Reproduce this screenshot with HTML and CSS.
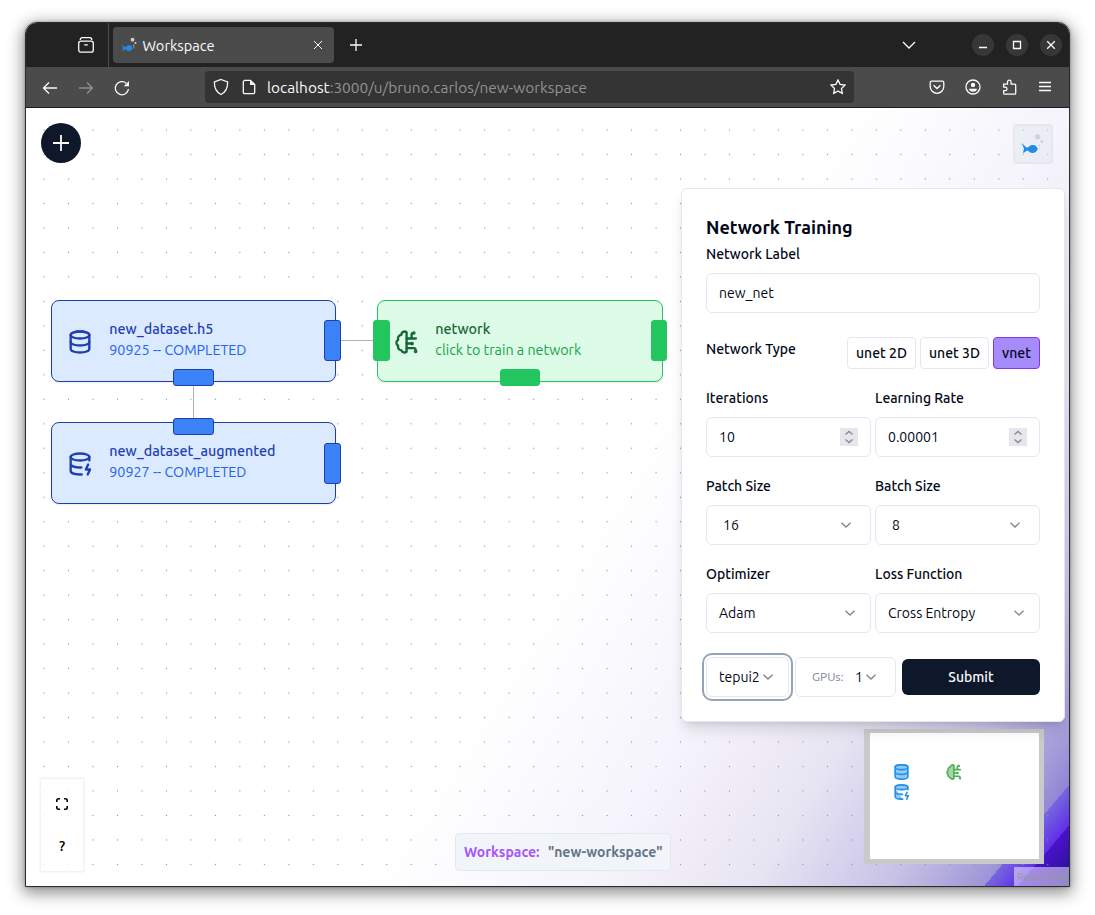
FILE: index.html
```html
<!DOCTYPE html>
<html lang="en">
<head>
<meta charset="utf-8">
<title>Workspace</title>
<link rel="stylesheet" href="styles.css">
</head>
<body>
<svg class="defs" aria-hidden="true">
  <symbol id="fish" viewBox="0 0 24 24">
    <path fill="#228be6" d="M.5 10.400 C2.800 12.200 4.600 14.600 6.600 15.400 C8.400 14.400 9.500 12.500 12 12.500 C15 12.300 17 14.700 17.600 16.700 C16.200 19.300 14.500 20.900 12 20.900 C9.800 20.800 8.400 19.400 6.800 18.200 C4.900 18.600 3.800 20 2.200 21.200 C2.200 19 3 17.600 3 16.400 C3 14.800 1.500 12.400 .5 10.400Z"/>
    <circle cx="17.300" cy="4" r="2.800" fill="#cfd4da"/><circle cx="21.700" cy="9" r="1.600" fill="#cfd4da"/><circle cx="19" cy="13" r="1" fill="#cfd4da"/><circle cx="19.600" cy="16.200" r=".8" fill="#cfd4da"/>
  </symbol>
  <symbol id="db" viewBox="0 0 24 24"><g stroke="currentColor" stroke-width="2" stroke-linejoin="round" stroke-linecap="round"><path d="M4 6v12c0 1.700 3.600 3 8 3s8-1.300 8-3V6c0-1.700-3.600-3-8-3S4 4.300 4 6z"/><ellipse cx="12" cy="6" rx="8" ry="3"/><path fill="none" d="M4 12c0 1.700 3.600 3 8 3s8-1.300 8-3"/></g></symbol>
  <symbol id="dbzap" viewBox="0 0 24 24"><g stroke="currentColor" stroke-width="2" stroke-linejoin="round" stroke-linecap="round"><ellipse cx="12" cy="6" rx="8" ry="3"/><path d="M4 6v12c0 1.500 2.900 2.900 7.500 3h2M20 6v3M4 12c0 1.600 3.200 2.800 7.200 3h2"/><path fill="none" d="M19 12.500l-2 4.200h3.600l-2 4.300"/></g></symbol>
  <symbol id="brain" viewBox="0 0 24 24"><g stroke="currentColor" stroke-width="2" stroke-linejoin="round" stroke-linecap="round"><path d="M12.500 3.600C10.500 2.200 8 3.600 8 5.800C5.500 6.300 4.600 8.400 5.300 10C3.200 11.400 3.300 14 5.200 15.100C4.800 17.300 6 18.900 8 19.200C8.700 21.100 11 21.500 12.500 20.400Z"/><path fill="none" d="M12.500 9h8M16.800 9V6c0-1 .6-1.800 1.600-1.800M12.500 13.300h4.500M12.500 17.300h6.500c.8 0 1.300.6 1.300 2"/><circle cx="18.800" cy="4.200" r=".5"/><circle cx="17.200" cy="13.300" r=".6"/><circle cx="20.200" cy="20" r=".6"/></g></symbol>
  <symbol id="chev" viewBox="0 0 12 12"><path d="M1.500 3.700 6 8l4.500-4.300" fill="none" stroke="#80848c" stroke-width="1.300"/></symbol>
</svg>

<div class="window">
  <header class="tabbar">
    <div class="recent">
      <svg width="18" height="18" viewBox="0 0 18 18" class="ln"><rect x="1.700" y="5.200" width="14.600" height="11" rx="2.200"/><path d="M3.200 4c0-1.700 1-2.300 2-2.300h7.600c1 0 2 .6 2 2.300M7.200 8.800h3.600"/></svg>
    </div>
    <div class="tab">
      <svg width="16" height="16" class="favicon"><use href="#fish"/></svg>
      <span class="tab-title">Workspace</span>
      <svg width="10" height="10" viewBox="0 0 10 10" class="ln thin"><path d="M1 1l8 8M9 1 1 9"/></svg>
    </div>
    <svg width="14" height="14" viewBox="0 0 14 14" class="ln newtab"><path d="M7 1v12M1 7h12"/></svg>
    <svg width="14" height="14" viewBox="0 0 14 14" class="ln alltabs"><path d="M1 4l6 6 6-6"/></svg>
    <div class="winbtns">
      <span class="winbtn"><svg width="12" height="12" viewBox="0 0 12 12" class="ln"><path d="M2 8.500h8"/></svg></span>
      <span class="winbtn"><svg width="12" height="12" viewBox="0 0 12 12" class="ln"><path d="M2.500 2.500h7v7h-7z"/></svg></span>
      <span class="winbtn"><svg width="12" height="12" viewBox="0 0 12 12" class="ln"><path d="M2.200 2.200l7.600 7.600M9.800 2.200 2.200 9.800"/></svg></span>
    </div>
  </header>
  <div class="toolbar">
    <div class="nav">
      <svg width="16" height="16" viewBox="0 0 16 16" class="ln"><path d="M15 8H1.500M7 2.500 1.500 8 7 13.500"/></svg>
      <svg width="16" height="16" viewBox="0 0 16 16" class="ln dim"><path d="M1 8h13.500M9 2.500 14.500 8 9 13.500"/></svg>
      <svg width="16" height="16" viewBox="0 0 16 16" class="ln"><path d="M14.500 9A6.600 6.600 0 1 1 12.300 3.200"/><path class="solid" d="M15 1v5.300H9.700z"/></svg>
    </div>
    <div class="urlbar">
      <svg width="16" height="18" viewBox="0 0 16 18" class="ln"><path d="M8 1.500 14.600 4c.3 6-1.800 10-6.600 12.500C3.200 14 1.100 10 1.400 4z"/></svg>
      <svg width="14" height="16" viewBox="0 0 14 16" class="ln"><path d="M2.500 1.300H8.500L12.700 5.500V13.200a1.500 1.500 0 0 1-1.500 1.500H2.800a1.500 1.500 0 0 1-1.500-1.500V2.500z"/><path class="solid" d="M8 1.300V6h4.700z"/></svg>
      <span class="url"><b>localhost</b>:3000/u/bruno.carlos/new-workspace</span>
      <svg width="16" height="16" viewBox="0 0 16 16" class="ln star"><path d="M8 1l2.100 4.400 4.900.7-3.500 3.400.8 4.900L8 12.100l-4.300 2.300.8-4.900L1 6.100l4.900-.7z"/></svg>
    </div>
    <div class="tools">
      <svg width="16" height="16" viewBox="0 0 16 16" class="ln"><path d="M2.500 2.200h11a1.300 1.300 0 0 1 1.300 1.300V7.500a6.800 6.800 0 0 1-13.600 0V3.500a1.300 1.300 0 0 1 1.300-1.300zM4.500 6.200 8 9.500l3.500-3.300"/></svg>
      <svg width="16" height="16" viewBox="0 0 16 16" class="ln"><circle cx="8" cy="8" r="7"/><circle class="solid" cx="8" cy="5.900" r="2.200"/><path class="solid" d="M4 9.700h8c0 2-1.800 3-4 3s-4-1-4-3z"/></svg>
      <svg width="16" height="16" viewBox="0 0 16 16" class="ln"><path d="M1.700 5.200h3.800V3a1.800 1.800 0 0 1 3.600 0v2.200h3.600a1 1 0 0 1 1 1V14.200a1 1 0 0 1-1 1H2.700a1 1 0 0 1-1-1V11.700h1.500a1.800 1.800 0 0 0 0-3.600H1.700z"/></svg>
      <svg width="14" height="16" viewBox="0 0 14 16" class="ln"><path d="M1 3.500h12M1 7.500h12M1 11.500h12" stroke-width="1.300"/></svg>
    </div>
  </div>

  <main class="canvas">
    <svg class="dots" width="1043" height="778"><defs><pattern id="grid" x="5.800" y="9.800" width="24.480" height="24.480" patternUnits="userSpaceOnUse"><circle cx="12.240" cy="12.240" r=".62" fill="#91919a"/></pattern></defs><rect width="1043" height="778" fill="url(#grid)"/></svg>
    <svg class="edges" width="700" height="400"><path d="M315 232.500h32M167.500 278v32" stroke="#b1b1b7" fill="none"/></svg>

    <button class="add"><svg width="16" height="16" viewBox="0 0 16 16"><path d="M8 0v16M0 8h16" stroke="#fff" stroke-width="1.800"/></svg></button>
    <div class="brand"><svg width="23" height="23"><use href="#fish"/></svg></div>

    <section class="node node-a">
      <svg width="28" height="28" class="nicon"><use href="#db"/></svg>
      <div><div class="ntitle">new_dataset.h5</div><div class="nsub">90925 -- COMPLETED</div></div>
      <i class="h right"></i><i class="h bottom"></i>
    </section>
    <section class="node node-b">
      <svg width="28" height="28" class="nicon"><use href="#dbzap"/></svg>
      <div><div class="ntitle">new_dataset_augmented</div><div class="nsub">90927 -- COMPLETED</div></div>
      <i class="h right"></i><i class="h top"></i>
    </section>
    <section class="node node-c">
      <svg width="28" height="28" class="nicon"><use href="#brain"/></svg>
      <div><div class="ntitle">network</div><div class="nsub">click to train a network</div></div>
      <i class="h left"></i><i class="h right"></i><i class="h bottom"></i>
    </section>

    <div class="controls">
      <span><svg width="12" height="12" viewBox="0 0 12 12"><path d="M.8 4V2.300A1.500 1.500 0 0 1 2.300.8H4M8 .8h1.700a1.500 1.500 0 0 1 1.500 1.500V4M11.200 8v1.700a1.500 1.500 0 0 1-1.500 1.500H8M4 11.200H2.300A1.500 1.500 0 0 1 .8 9.700V8" fill="none" stroke="#000" stroke-width="1.600"/></svg></span>
      <span class="help">?</span>
    </div>
    <div class="wsname"><span>Workspace:</span><em>"new-workspace"</em></div>
    <div class="attribution">React Flow</div>
    <div class="minimap">
      <svg width="169" height="126" viewBox="0 0 169 126">
        <g color="#2191e8" fill="#90caf9"><use href="#db" x="22" y="29.500" width="19" height="19"/><use href="#dbzap" x="22" y="49.500" width="19" height="19"/></g>
        <g color="#4caf50" fill="#a5d6a7"><use href="#brain" x="74" y="29.500" width="19" height="19"/></g>
      </svg>
    </div>

    <form class="panel">
      <h2>Network Training</h2>
      <label class="first">Network Label</label>
      <div class="field">new_net</div>
      <div class="types"><label>Network Type</label><div class="chips"><span class="chip">unet 2D</span><span class="chip">unet 3D</span><span class="chip on">vnet</span></div></div>
      <div class="grid">
        <div><label>Iterations</label><div class="field num">10<svg width="18" height="18" viewBox="0 0 18 18"><path fill="#e7e6ec" d="M0 0h18v18H0z"/><path d="M5.500 6.500 9 3.500l3.500 3M5.500 11.500 9 14.500l3.500-3" fill="none" stroke="#8b8a94" stroke-width="1.400"/></svg></div></div>
        <div><label>Learning Rate</label><div class="field num">0.00001<svg width="18" height="18" viewBox="0 0 18 18"><path fill="#e7e6ec" d="M0 0h18v18H0z"/><path d="M5.500 6.500 9 3.500l3.500 3M5.500 11.500 9 14.500l3.500-3" fill="none" stroke="#8b8a94" stroke-width="1.400"/></svg></div></div>
        <div><label>Patch Size</label><div class="field inset">16<svg width="12" height="12"><use href="#chev"/></svg></div></div>
        <div><label>Batch Size</label><div class="field inset">8<svg width="12" height="12"><use href="#chev"/></svg></div></div>
        <div><label>Optimizer</label><div class="field sel">Adam<svg width="12" height="12"><use href="#chev"/></svg></div></div>
        <div><label>Loss Function</label><div class="field sel">Cross Entropy<svg width="12" height="12"><use href="#chev"/></svg></div></div>
      </div>
      <div class="actions">
        <div class="field host">tepui2<svg width="12" height="12"><use href="#chev"/></svg></div>
        <div class="field gpus"><small>GPUs:</small><span>1</span><svg width="12" height="12"><use href="#chev"/></svg></div>
        <button type="button" class="submit">Submit</button>
      </div>
    </form>
  </main>
</div>
</body>
</html>
```
FILE: styles.css
```css
* { box-sizing: border-box; }
body { margin: 0; width: 1095px; height: 915px; padding: 22px 25px; background: #fff; overflow: hidden; font: 14px/20px Ubuntu, "Noto Sans", sans-serif; color: #020817; }
.defs { position: absolute; width: 0; height: 0; }
svg { display: block; flex: none; fill: none; }
.window { width: 1045px; height: 865px; border: 1px solid #2b2b2e; border-radius: 12px 12px 0 0; overflow: hidden; box-shadow: 0 4px 16px 2px rgba(0,0,0,.45), 0 0 3px rgba(0,0,0,.3); background: #fff; }
.ln { stroke: #fbfbfe; stroke-width: 1.3; }
.ln .solid { fill: #fbfbfe; stroke: none; }
.thin { stroke-width: 1; }
.dim { stroke: #8f8f93; }

.tabbar { height: 44px; background: #222; display: flex; align-items: center; }
.recent { width: 83px; height: 44px; border-right: 1px solid #4c4c4c; display: flex; align-items: center; padding-left: 51px; }
.tab { margin-left: 4px; width: 221px; height: 36px; border-radius: 4px; background: #4b4b4b; display: flex; align-items: center; padding: 0 11px 0 8px; color: #fbfbfe; }
.tab-title { margin-left: 5.5px; padding-top: 2px; flex: 1; font-size: 14.67px; }
.newtab { margin-left: 15px; }
.alltabs { margin-left: auto; }
.winbtns { display: flex; gap: 12px; margin: 0 7px 0 56px; }
.winbtn { width: 22px; height: 22px; border-radius: 50%; background: #373737; display: flex; align-items: center; justify-content: center; }

.toolbar { height: 41px; background: #4b4b4b; border-bottom: 1px solid #1b1b1b; display: flex; align-items: center; }
.nav { display: flex; gap: 20px; padding-left: 16px; padding-top: 1px; width: 179px; }
.urlbar { width: 649px; height: 32px; border-radius: 4px; background: #343434; display: flex; align-items: center; padding: 0 8px; }
.urlbar svg:nth-child(2) { margin-left: 13px; }
.url { margin-left: 11px; padding-top: 2px; flex: 1; font-size: 15.4px; color: #929292; }
.url b { font-weight: 400; color: #fbfbfe; }
.tools { flex: 1; display: flex; justify-content: space-between; padding: 0 17px 0 75px; }

.canvas { position: relative; height: 778px; background:
  linear-gradient(130deg, transparent 95%, #7766de 95%, #5f30e8 97%, #4a12cc 97%, #22108c 100%),
  linear-gradient(122deg, #fff 54%, #f6f4fc 68%, #efecf7 74%, #e8e5f3 79%, #d7d2ed 84%, #c8c3e6 88%, #b2abde 91.5%, #a098d8 94%, #8478d8 97%); }
.dots, .edges { position: absolute; left: 0; top: 0; }

.add { position: absolute; left: 15px; top: 15px; width: 40px; height: 40px; border: 0; border-radius: 50%; background: #0f172a; display: grid; place-items: center; padding: 0; }
.brand { position: absolute; left: 987px; top: 16px; width: 40px; height: 40px; border: 2px solid #e5e7ef; border-radius: 4px; background: rgba(226,232,240,.5); display: grid; place-items: center; }
.brand svg { margin-right: 2px; }

.node { position: absolute; width: 285px; height: 82px; border: 1px solid; border-radius: 8px; display: flex; align-items: center; padding: 0 0 2px 14px; gap: 15.3px; font-size: 14.3px; box-shadow: 0 1px 2px rgba(0,0,0,.08); }
.nicon { margin-top: 3px; }
.node-a, .node-b { left: 25px; background: #dbeafe; border-color: #1e40af; color: #1e40af; }
.node-a { top: 192px; }
.node-b { top: 314px; }
.node-c { left: 351px; width: 286px; top: 192px; background: #dcfce7; border-color: #22c55e; color: #166534; }
.ntitle { line-height: 21px; font-weight: 500; }
.nsub { line-height: 21px; color: #2563eb; }
.node-c .nsub { color: #16a34a; }
.h { position: absolute; background: #3b82f6; border: 1px solid #1e40af; border-radius: 3px; width: 17px; height: 41px; }
.node-c .h { background: #22c55e; border-color: #22c55e; }
.h.right { right: -6px; top: 19px; }
.node-b .h.right { top: 20px; }
.node-c .h.right { right: -5px; width: 16px; }
.h.left { left: -5px; top: 19px; }
.h.bottom, .h.top { width: 41px; height: 17px; left: 121px; }
.h.bottom { bottom: -5px; }
.node-c .h.bottom { left: 122px; width: 40px; }
.h.top { top: -5px; }

.controls { position: absolute; left: 15px; top: 671px; width: 42px; height: 92px; background: rgba(255,255,255,.8); box-shadow: 0 0 2px 1px rgba(0,0,0,.08); padding: 4px 5px; display: grid; grid-template-rows: 42px 42px; place-items: center; color: #000; }
.help { font-size: 15px; font-weight: 500; }
.wsname { position: absolute; left: 429px; top: 725px; width: 216px; height: 38px; border: 1px solid #e2e8f0; border-radius: 4px; background: #f1f5f9; display: flex; align-items: center; justify-content: space-between; padding: 0 7.5px 0 8px; font-weight: 600; }
.wsname span { color: #a855f7; }
.wsname em { font-style: normal; color: #64748b; }
.attribution { position: absolute; right: 0; bottom: 0; width: 55px; height: 19px; background: rgba(255,255,255,.5); color: #999; font-size: 10px; line-height: 19px; text-align: center; }
.minimap { position: absolute; left: 838px; top: 621px; width: 180px; height: 135px; background: #cacaca; padding: 4px 5px 5px 6px; }
.minimap svg { background: #fff; }

.panel { position: absolute; left: 655px; top: 80px; width: 384px; height: 534px; background: #fff; border: 1px solid #e2e8f0; border-radius: 6px; padding: 24px; box-shadow: 0 10px 15px -3px rgba(0,0,0,.12), 0 4px 6px -4px rgba(0,0,0,.12); }
h2 { margin: 0; font-size: 18px; line-height: 28px; font-weight: 600; }
label { display: block; font-weight: 500; }
.first { line-height: 26px; margin-bottom: 6px; }
.field { height: 40px; border: 1px solid #e2e8f0; border-radius: 6px; background: #fff; display: flex; align-items: center; justify-content: space-between; padding: 0 12px; }
.types { display: flex; justify-content: space-between; margin: 24px 0 19px; }
.types label { line-height: 24px; }
.chips { display: flex; gap: 4px; }
.chip { height: 32px; width: 69px; border: 1px solid #e2e8f0; border-radius: 4px; line-height: 30px; text-align: center; font-weight: 500; }
.chip.on { width: 47px; background: #a78bfa; border-color: #7c3aed; }
.grid { display: grid; grid-template-columns: 165px 165px; column-gap: 4px; row-gap: 19px; }
.grid label { margin-bottom: 9px; }
.field.inset { padding: 0 18px 0 16px; }
.field.sel { padding-right: 14px; }
.actions { display: flex; align-items: center; margin-top: 24px; }
.host { width: 83px; padding-right: 14px; box-shadow: 0 0 0 2px #fff, 0 0 0 4px #94a3b8; }
.gpus { width: 101px; margin-left: 6px; padding: 0 18px 0 16px; }
.gpus small { font-size: 12px; color: #7c879a; margin-right: auto; }
.gpus span { margin-right: 2px; }
.submit { margin-left: 6px; width: 138px; height: 36px; padding: 0; border: 0; border-radius: 6px; background: #0f172a; color: #f8fafc; font: 500 14px Ubuntu, "Noto Sans", sans-serif; }
```
